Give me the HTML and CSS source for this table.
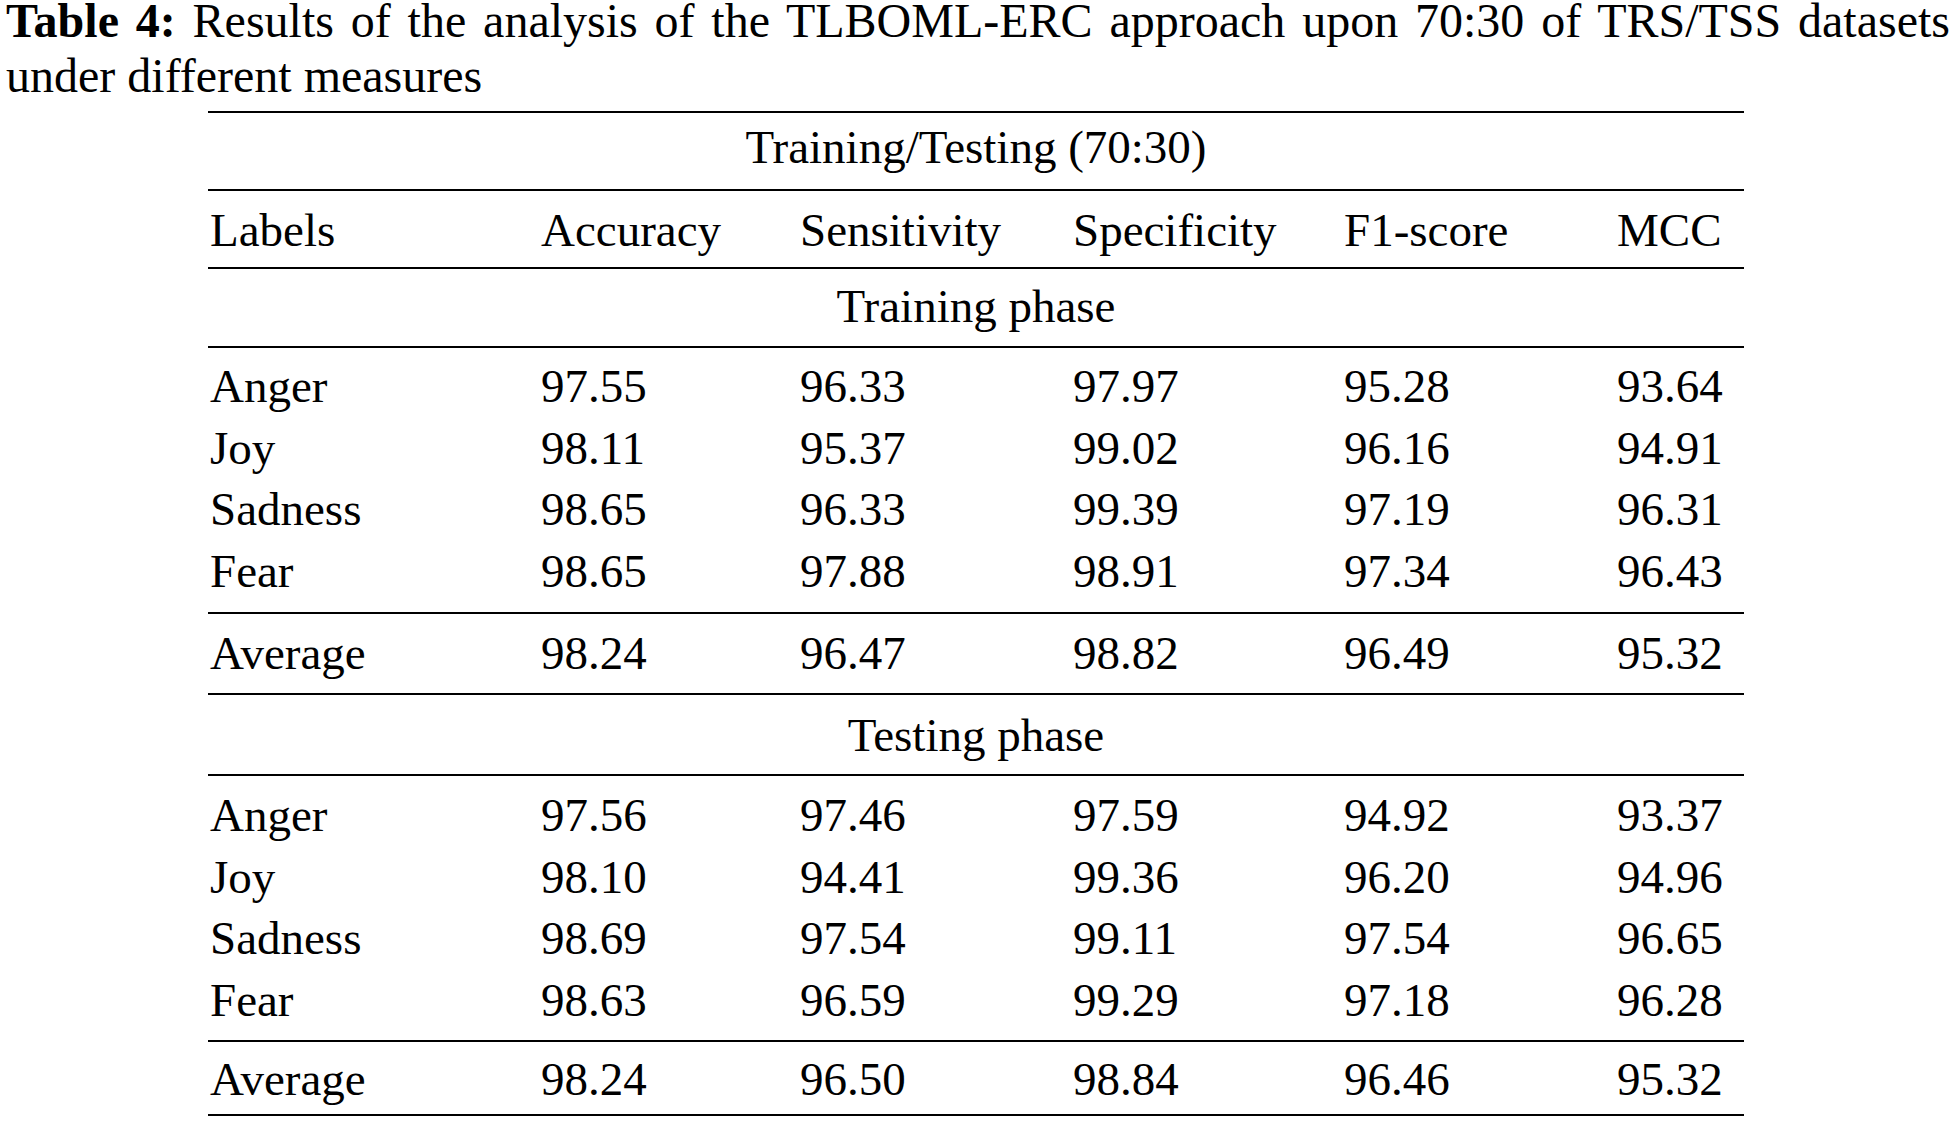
FILE: index.html
```html
<!DOCTYPE html>
<html lang="en">
<head>
<meta charset="utf-8">
<title>Table 4</title>
<link rel="stylesheet" href="styles.css">
</head>
<body>
<div class="page">
  <p class="caption"><b>Table 4:</b> Results of the analysis of the TLBOML-ERC approach upon 70:30 of TRS/TSS datasets <span class="caption-tail">under different measures</span></p>
  <div class="table">
    <div class="band span top-head">Training/Testing (70:30)</div>
    <div class="band row col-head">
      <div class="cell">Labels</div><div class="cell">Accuracy</div><div class="cell">Sensitivity</div><div class="cell">Specificity</div><div class="cell">F1-score</div><div class="cell">MCC</div>
    </div>
    <div class="band span phase-1">Training phase</div>
    <div class="band group group-1">
      <div class="row data"><div class="cell">Anger</div><div class="cell">97.55</div><div class="cell">96.33</div><div class="cell">97.97</div><div class="cell">95.28</div><div class="cell">93.64</div></div>
      <div class="row data"><div class="cell">Joy</div><div class="cell">98.11</div><div class="cell">95.37</div><div class="cell">99.02</div><div class="cell">96.16</div><div class="cell">94.91</div></div>
      <div class="row data"><div class="cell">Sadness</div><div class="cell">98.65</div><div class="cell">96.33</div><div class="cell">99.39</div><div class="cell">97.19</div><div class="cell">96.31</div></div>
      <div class="row data"><div class="cell">Fear</div><div class="cell">98.65</div><div class="cell">97.88</div><div class="cell">98.91</div><div class="cell">97.34</div><div class="cell">96.43</div></div>
    </div>
    <div class="band row avg-1">
      <div class="cell">Average</div><div class="cell">98.24</div><div class="cell">96.47</div><div class="cell">98.82</div><div class="cell">96.49</div><div class="cell">95.32</div>
    </div>
    <div class="band span phase-2">Testing phase</div>
    <div class="band group group-2">
      <div class="row data"><div class="cell">Anger</div><div class="cell">97.56</div><div class="cell">97.46</div><div class="cell">97.59</div><div class="cell">94.92</div><div class="cell">93.37</div></div>
      <div class="row data"><div class="cell">Joy</div><div class="cell">98.10</div><div class="cell">94.41</div><div class="cell">99.36</div><div class="cell">96.20</div><div class="cell">94.96</div></div>
      <div class="row data"><div class="cell">Sadness</div><div class="cell">98.69</div><div class="cell">97.54</div><div class="cell">99.11</div><div class="cell">97.54</div><div class="cell">96.65</div></div>
      <div class="row data"><div class="cell">Fear</div><div class="cell">98.63</div><div class="cell">96.59</div><div class="cell">99.29</div><div class="cell">97.18</div><div class="cell">96.28</div></div>
    </div>
    <div class="band row avg-2 last">
      <div class="cell">Average</div><div class="cell">98.24</div><div class="cell">96.50</div><div class="cell">98.84</div><div class="cell">96.46</div><div class="cell">95.32</div>
    </div>
  </div>
</div>
</body>
</html>
```

FILE: styles.css
```css
html, body {
  margin: 0;
  padding: 0;
  background: #ffffff;
}

body {
  font-family: "Liberation Serif", "Times New Roman", serif;
  color: #000000;
}

.page {
  width: 1944px;
  margin-left: 6px;
}

.caption {
  margin: 0;
  font-size: 48px;
  line-height: 41px;
  text-align: justify;
}

.caption b {
  font-weight: bold;
}

.caption-tail {
  line-height: 69px;
}

.table {
  margin: 1px 0 0 202px;
  width: 1536px;
  font-size: 47px;
  line-height: 70px;
}

.band {
  border-top: 2px solid #000000;
}

.last {
  border-bottom: 2px solid #000000;
}

.span {
  text-align: center;
  white-space: nowrap;
}

.row {
  display: grid;
  grid-template-columns: 331px 259px 273px 271px 273px 1fr;
}

.cell {
  padding-left: 2px;
  white-space: nowrap;
}

.top-head {
  line-height: 69px;
  padding: 0 0 7px 0;
}

.col-head {
  padding: 4px 0 2px 0;
}

.phase-1 {
  padding: 2px 0 5px 0;
}

.group-1 {
  padding: 8px 0 10px 0;
}

.group-2 {
  padding: 9px 0 9px 0;
}

.data {
  line-height: 61.5px;
}

.avg-1 {
  padding: 4px 0 5px 0;
}

.phase-2 {
  padding: 5px 0 4px 0;
}

.avg-2 {
  padding: 2px 0 0 0;
}
```
